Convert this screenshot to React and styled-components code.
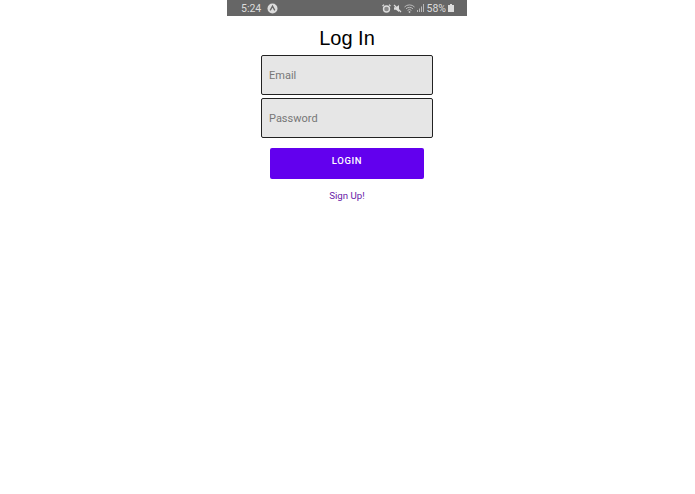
import React from 'react';
import styled, {createGlobalStyle} from 'styled-components';

const GlobalStyle = createGlobalStyle`
    html, body {
        margin: 0;
        padding: 0;
        background: #fff;
    }
    * {
        box-sizing: border-box;
    }
`;

const Phone = styled.div`
    width: 240px;
    height: 494px;
    margin-left: 227px;
    background: #fff;
    font-family: Roboto, "Liberation Sans", sans-serif;
`;

const StatusBar = styled.div`
    height: 16px;
    background: #666;
    display: flex;
    align-items: center;
    justify-content: space-between;
    padding: 0 13px 0 14px;
    color: #dcdcdc;
    font-size: 10px;
`;

const StatusGroup = styled.div`
    display: flex;
    align-items: center;
    gap: ${({gap}) => gap || 6}px;
`;

const Time = styled.span`
    font-size: 10.5px;
`;

const Battery = styled.span`
    font-size: 10.5px;
    margin-left: 1px;
`;

const Content = styled.div`
    display: flex;
    flex-direction: column;
    align-items: center;
`;

const Title = styled.h1`
    margin: 10px 0 5px;
    height: 24px;
    font-family: "Liberation Sans", Arial, sans-serif;
    font-size: 20px;
    line-height: 24px;
    font-weight: 400;
    color: #000;
`;

const Field = styled.input`
    display: block;
    width: 172px;
    height: 40px;
    margin-bottom: 3px;
    padding: 1px 7px 0;
    border: 1px solid #222;
    border-bottom-width: 1.5px;
    border-radius: 2px;
    background: #e6e6e6;
    font-family: Roboto, sans-serif;
    font-size: 11px;
    outline: none;

    &::placeholder {
        color: #777;
        opacity: 1;
    }
`;

const LoginButton = styled.button`
    width: 154px;
    height: 31px;
    margin-top: 7px;
    padding: 0 0 6px;
    border: 0;
    border-radius: 2px;
    background: #6200ee;
    color: #fff;
    font-family: Roboto, sans-serif;
    font-size: 9.5px;
    font-weight: 500;
    letter-spacing: 0.6px;
`;

const SignUp = styled.a`
    margin-top: 11px;
    color: #6a1ba8;
    font-size: 9.7px;
    line-height: 12px;
`;

const AutoIcon = () => (
    <svg width="11" height="11" viewBox="0 0 11 11">
        <circle cx="5.5" cy="5.5" r="5" fill="#dcdcdc" />
        <path d="M3.2 7.4 5.5 3.2 7.8 7.4" fill="none" stroke="#666" strokeWidth="1.3" />
    </svg>
);

const AlarmIcon = () => (
    <svg width="9" height="9" viewBox="0 0 9 9">
        <circle cx="4.5" cy="5" r="3" fill="#8a8a8a" stroke="#dcdcdc" strokeWidth="1.4" />
        <path d="M0.5 2 2 0.6M8.5 2 7 0.6" stroke="#dcdcdc" strokeWidth="1.2" />
    </svg>
);

const MuteIcon = () => (
    <svg width="9" height="9" viewBox="0 0 9 9">
        <path d="M1 3.2h2L6 1v7L3 5.8H1z" fill="#dcdcdc" />
        <path d="M1 1 8 8" stroke="#dcdcdc" strokeWidth="1.2" />
    </svg>
);

const WifiIcon = () => (
    <svg width="11" height="9" viewBox="0 0 11 9">
        <path d="M0.5 3a7 7 0 0 1 10 0M2 4.8a5 5 0 0 1 7 0M3.6 6.4a2.6 2.6 0 0 1 3.8 0" fill="none" stroke="#c4c4c4" strokeWidth="0.9" />
        <circle cx="5.5" cy="8" r="0.9" fill="#c4c4c4" />
    </svg>
);

const SignalIcon = () => (
    <svg width="7" height="8" viewBox="0 0 7 8">
        <path d="M0 6h1v2H0zM2 4.5h1V8H2zM4 2.5h1V8H4zM6 0h1v8H6z" fill="#b8b8b8" />
    </svg>
);

const BatteryIcon = () => (
    <svg width="6" height="8" viewBox="0 0 6 8">
        <path d="M2 0h2v1h2v7H0V1h2z" fill="#dcdcdc" />
    </svg>
);

export default function App() {
    return (
        <Phone>
            <GlobalStyle />
            <StatusBar>
                <StatusGroup>
                    <Time>5:24</Time>
                    <AutoIcon />
                </StatusGroup>
                <StatusGroup gap={2}>
                    <AlarmIcon />
                    <MuteIcon />
                    <WifiIcon />
                    <SignalIcon />
                    <Battery>58%</Battery>
                    <BatteryIcon />
                </StatusGroup>
            </StatusBar>
            <Content>
                <Title>Log In</Title>
                <Field placeholder="Email" />
                <Field placeholder="Password" type="password" />
                <LoginButton>LOGIN</LoginButton>
                <SignUp>Sign Up!</SignUp>
            </Content>
        </Phone>
    );
}
